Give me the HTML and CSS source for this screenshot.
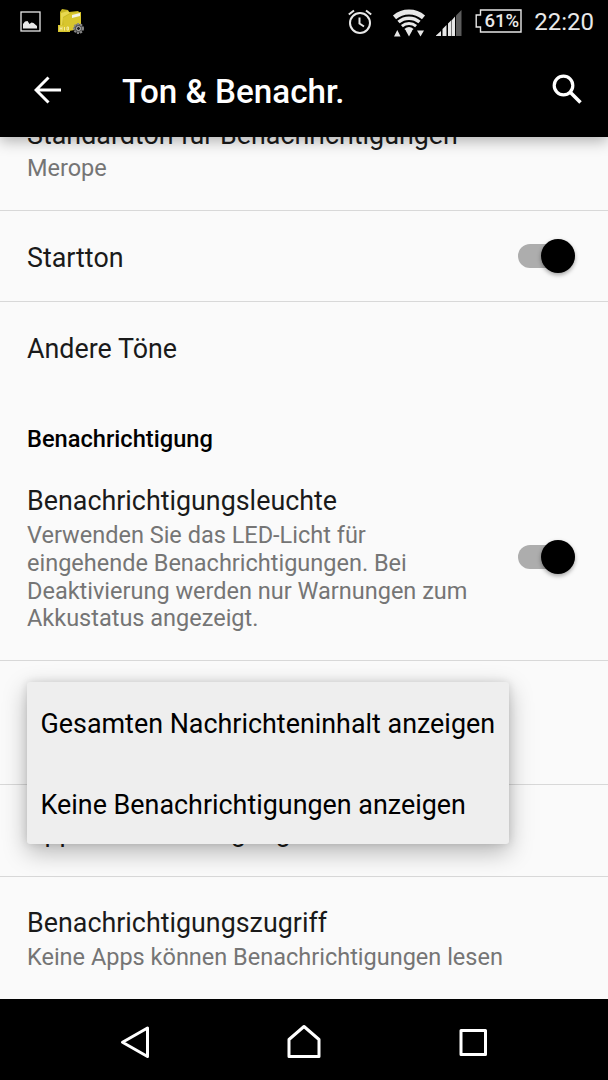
FILE: index.html
```html
<!DOCTYPE html>
<html lang="de">
<head>
    <meta charset="utf-8">
    <title>Ton &amp; Benachr.</title>
    <link rel="stylesheet" href="styles.css">
</head>
<body>
    <div class="screen">
        <div class="status-bar">
            <svg class="status-picture" width="22" height="22" viewBox="0 0 22 22">
                <rect x="1" y="1" width="19" height="19" fill="none" stroke="#e8e8e8" stroke-width="1.3"/>
                <path d="M3 17.500V13l2-2.500 2.500-.5 2 3 2-1.500 2 .5 3.500 3v2.500z" fill="#e8e8e8"/>
            </svg>
            <svg class="status-folder" width="28" height="28" viewBox="0 0 28 28">
                <path d="M3 4l2-3 6 1 1 2 9-1 2 2v16l-16 3-4-2z" fill="#c9b824"/>
                <path d="M4 5l7-2 2 2-7 4-1 9-1-1z" fill="#e8d850"/>
                <path d="M6 10l9-5 9-1v14l-6 4H7z" fill="#d8c62e"/>
                <path d="M15 7l8-2v3l-8 2z" fill="#f4f4e8"/>
                <rect x="1" y="17" width="12" height="7" fill="#d8c62e"/>
                <path d="M3 18.500v4M3 20.500h2M5 18.500v4M7.500 19v3.500M10 19h1.500v3H10z" fill="none" stroke="#f4eaa0"/>
                <circle cx="21.500" cy="20.500" r="4.500" fill="#555" stroke="#888" stroke-width="2" stroke-dasharray="2 1.200"/>
                <circle cx="21.500" cy="20.500" r="2" fill="#222" stroke="#bbb"/>
            </svg>
            <span class="spacer"></span>
            <svg class="status-alarm" width="24" height="26" viewBox="0 0 24 26">
                <g fill="none" stroke="#e8e8e8" stroke-width="2">
                    <circle cx="12" cy="14" r="10"/>
                    <path d="M11.500 8.500v6l4.500 3M.8 5.500L6 1.500M23.200 5.500L18 1.500"/>
                </g>
            </svg>
            <svg class="status-wifi" width="34" height="30" viewBox="0 0 34 30">
                <g fill="none" stroke="#e8e8e8">
                    <path d="M2.500 9.300a22.500 22.500 0 0 1 29 0" stroke-width="4.800"/>
                    <path d="M6.500 14a16.300 16.300 0 0 1 21 0" stroke-width="3.500"/>
                    <path d="M9.900 18.100a11 11 0 0 1 14.200 0" stroke-width="3"/>
                </g>
                <path d="M12.400 21a7.200 7.200 0 0 1 9.200 0L20 22.500h-6zM2 28.500l3.300-6.500 3.300 6.500zM13.700 22.500h6.600L17 28.500zM25 22.500h7l-3.500 6z" fill="#e8e8e8"/>
            </svg>
            <svg class="status-signal" width="26" height="26" viewBox="0 0 26 26">
                <path d="M0 26v-.5L5 21V26zM6.500 26v-7l4-4V26zM12 26V13.500l3.500-3.500V26zM16 26V10l3-3.500V26z" fill="#e8e8e8"/>
                <path d="M20 26V5.500L25.500 0v26z" fill="#5c5c5c"/>
            </svg>
            <div class="battery">
                <svg width="47" height="24" viewBox="0 0 47 24">
                    <path d="M5.500 1H46v22H5.500v-5H1.200V6h4.300z" fill="none" stroke="#e8e8e8" stroke-width="1.400"/>
                </svg>
                <span class="battery-level">61%</span>
            </div>
            <span class="clock">22:20</span>
        </div>

        <div class="app-bar">
            <svg class="back-icon" width="28" height="28" viewBox="0 0 28 28">
                <path d="M27 14H2.500M14.500 1.500L2 14l12.500 12.500" fill="none" stroke="#fff" stroke-width="3"/>
            </svg>
            <h1 class="app-title">Ton &amp; Benachr.</h1>
            <svg class="search-icon" width="30" height="30" viewBox="0 0 30 30">
                <g fill="none" stroke="#fff">
                    <circle cx="11.500" cy="11.500" r="9.300" stroke-width="3.200"/>
                    <path d="M18 18l10.500 10.500" stroke-width="3.600"/>
                </g>
            </svg>
        </div>

        <div class="settings">
            <div class="row row-clipped">
                <div class="title">Standardton für Benachrichtigungen</div>
                <div class="summary">Merope</div>
            </div>
            <div class="row row-switch row-start">
                <div class="title">Startton</div>
                <div class="switch"></div>
            </div>
            <div class="row row-single row-last">
                <div class="title">Andere Töne</div>
            </div>
            <h2 class="category">Benachrichtigung</h2>
            <div class="row row-switch row-light">
                <div class="row-text">
                    <div class="title">Benachrichtigungsleuchte</div>
                    <div class="summary">Verwenden Sie das LED-Licht für eingehende Benachrichtigungen. Bei Deaktivierung werden nur Warnungen zum Akkustatus angezeigt.</div>
                </div>
                <div class="switch"></div>
            </div>
            <div class="row row-popup">
                <div class="popup">
                    <div class="popup-item">Gesamten Nachrichteninhalt anzeigen</div>
                    <div class="popup-item">Keine Benachrichtigungen anzeigen</div>
                </div>
            </div>
            <div class="row row-single">
                <div class="title">App-Benachrichtigungen</div>
            </div>
            <div class="row row-double row-last">
                <div class="title">Benachrichtigungszugriff</div>
                <div class="summary">Keine Apps können Benachrichtigungen lesen</div>
            </div>
        </div>

        <div class="nav-bar">
            <svg width="32" height="36" viewBox="0 0 32 36">
                <path d="M28.500 4v28.500L3.500 18.300z" fill="none" stroke="#fff" stroke-width="3" stroke-linejoin="round"/>
            </svg>
            <svg width="36" height="36" viewBox="0 0 36 36">
                <path d="M3 32.500V15.500L18 2.500l15 13v17z" fill="none" stroke="#fff" stroke-width="3" stroke-linejoin="round"/>
            </svg>
            <svg width="32" height="36" viewBox="0 0 32 36">
                <rect x="4" y="6.500" width="24.500" height="24" fill="none" stroke="#fff" stroke-width="3" stroke-linejoin="round"/>
            </svg>
        </div>
    </div>
</body>
</html>
```
FILE: styles.css
```css
* {
    box-sizing: border-box;
}
body {
    margin: 0;
    font-family: Roboto, sans-serif;
    background: #000;
}
.screen {
    width: 608px;
    height: 1080px;
    display: flex;
    flex-direction: column;
    overflow: hidden;
    background: #fafafa;
}

/* Status bar */
.status-bar {
    height: 43px;
    display: flex;
    align-items: center;
    padding: 0 14px 0 20px;
    background: #000;
    color: #e8e8e8;
}
.status-folder {
    margin-left: 15px;
}
.spacer {
    flex: 1;
}
.status-wifi {
    margin: 2px 0 0 20px;
}
.status-signal {
    margin: 2px 0 0 10px;
}
.battery {
    position: relative;
    height: 24px;
    margin: 0 12px 2px 13px;
}
.battery-level {
    position: absolute;
    left: 6px;
    right: 0;
    top: 0;
    line-height: 25px;
    text-align: center;
    font-size: 18.5px;
    font-weight: 500;
}
.clock {
    font-size: 24px;
    line-height: 43px;
    padding-top: 2px;
}

/* App bar */
.app-bar {
    position: relative;
    z-index: 1;
    height: 94px;
    display: flex;
    align-items: center;
    padding: 0 26px 1px 34px;
    background: #000;
    color: #fff;
    box-shadow: 0 4px 14px rgba(0, 0, 0, 0.3);
}
.app-title {
    flex: 1;
    margin: 3px 0 0 60px;
    font-size: 33.2px;
    font-weight: 500;
}
.search-icon {
    margin-bottom: 2px;
}

/* Settings list */
.settings {
    height: 862px;
}
.row {
    display: flex;
    flex-direction: column;
    justify-content: center;
    padding: 0 27px;
    border-bottom: 1px solid #d8d8d8;
}
.row-last {
    border-bottom-color: transparent;
}
.row-switch {
    flex-direction: row;
    align-items: center;
    justify-content: space-between;
    padding-right: 33px;
}
.row-clipped {
    height: 74px;
    justify-content: flex-end;
    padding-bottom: 27px;
}
.row-start {
    height: 91px;
}
.row-start .title {
    padding-top: 3px;
}
.row-single {
    height: 92px;
}
.row-single .title {
    padding-top: 2px;
}
.row-light {
    height: 193px;
    padding-bottom: 14px;
}
.row-double {
    height: 123px;
    padding-top: 2px;
}
.row-popup {
    height: 124px;
    position: relative;
}
.row-text {
    width: 460px;
    padding-top: 4px;
}
.title {
    font-size: 26.85px;
    line-height: 32px;
    color: #1a1a1a;
}
.summary {
    margin-top: 5px;
    font-size: 23.5px;
    line-height: 27.7px;
    color: #757575;
}
.row-clipped .summary {
    margin-top: 4px;
}
.category {
    height: 74px;
    margin: 0;
    padding-left: 27px;
    font-size: 23.65px;
    font-weight: 500;
    line-height: 90px;
    color: #000;
}

/* Switch */
.switch {
    width: 57px;
    height: 24px;
    display: flex;
    align-items: center;
    justify-content: flex-end;
    border-radius: 12px;
    background: #adadad;
}
.switch::after {
    content: "";
    width: 34px;
    height: 34px;
    border-radius: 50%;
    background: #000;
    box-shadow: 0 2px 4px rgba(0, 0, 0, 0.35);
}

/* Popup menu */
.popup {
    position: absolute;
    z-index: 1;
    left: 27px;
    top: 21px;
    width: 482px;
    height: 162px;
    padding-top: 2px;
    border-radius: 3px;
    background: #eee;
    box-shadow: 0 8px 24px rgba(0, 0, 0, 0.28), 0 0 8px rgba(0, 0, 0, 0.12);
}
.popup-item {
    padding-left: 13.5px;
    font-size: 26.88px;
    line-height: 81px;
    white-space: nowrap;
    color: #000;
}

/* Navigation bar */
.nav-bar {
    height: 81px;
    display: flex;
    align-items: center;
    justify-content: space-between;
    padding: 5px 119px 0 119px;
    background: #000;
}
```
